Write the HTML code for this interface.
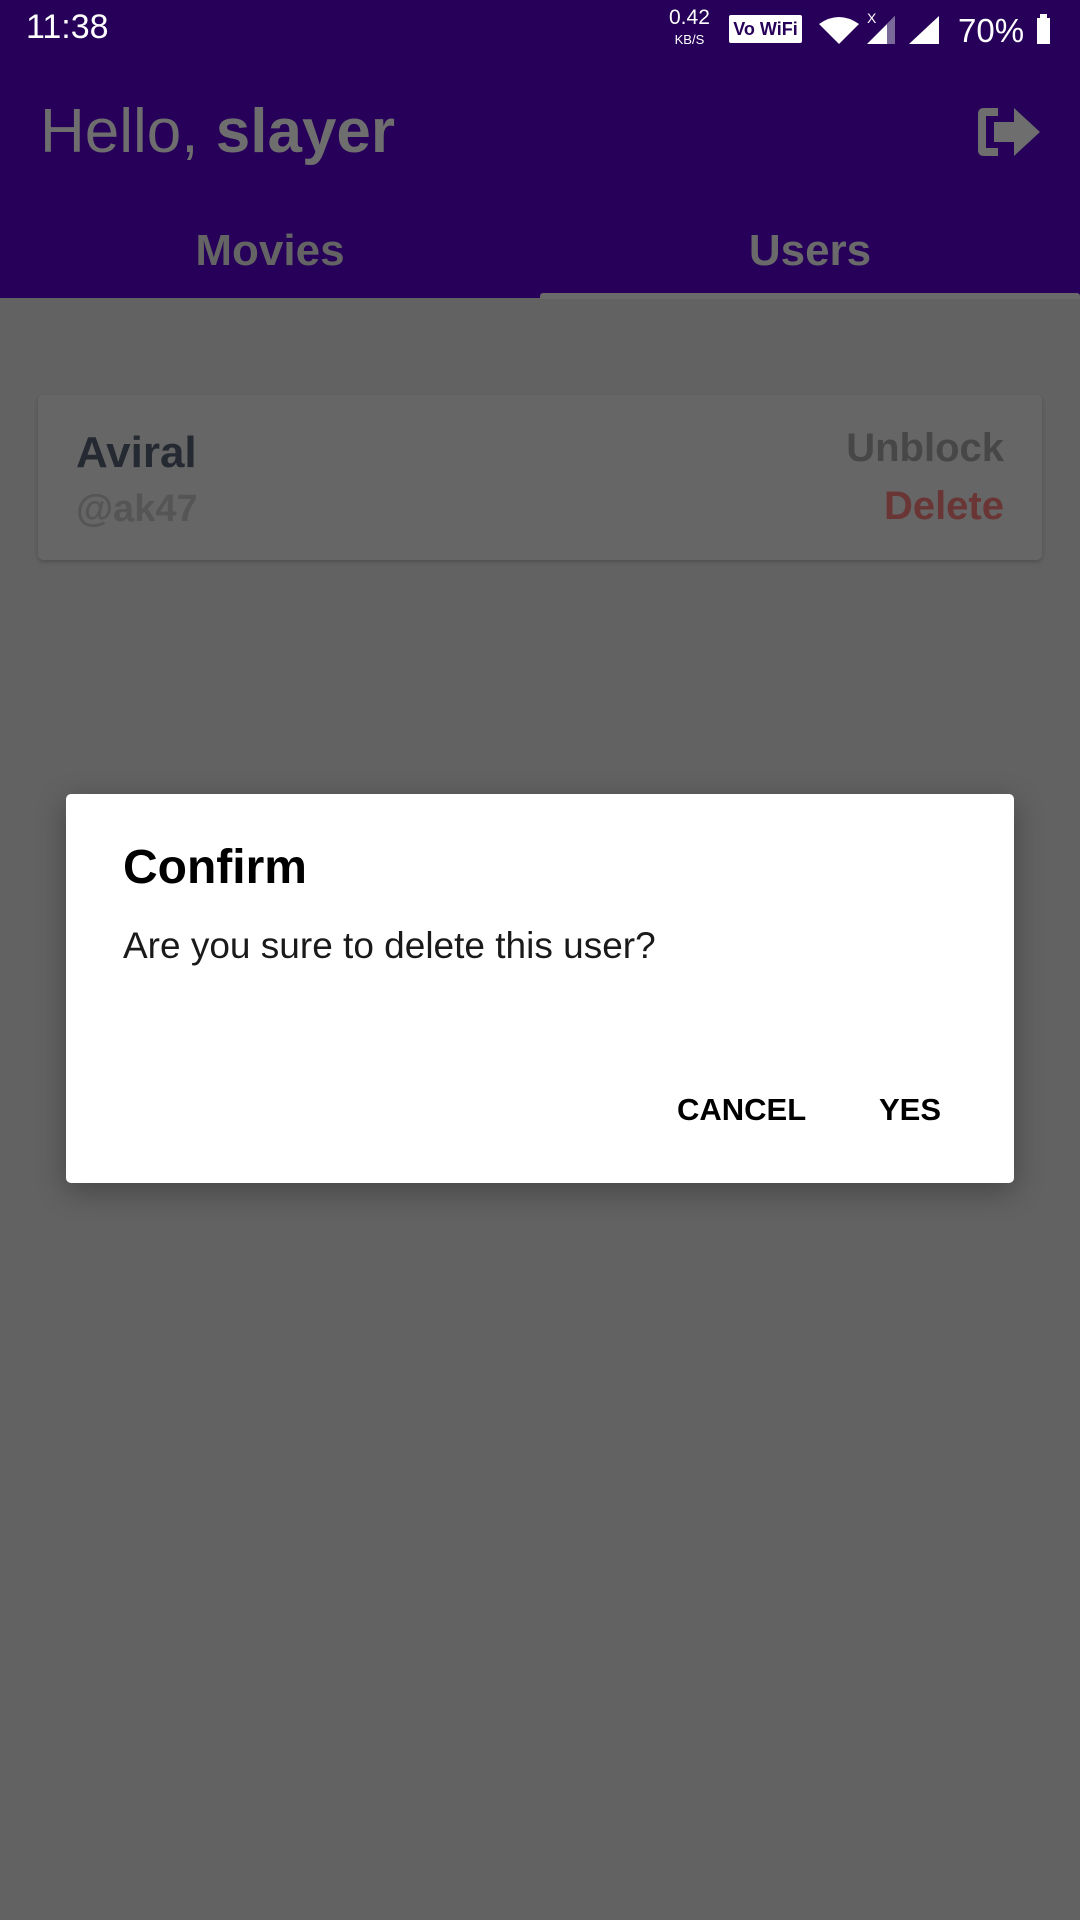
<!DOCTYPE html>
<html><head><meta charset="utf-8"><style>
body{margin:0;width:1080px;height:1920px;background:#626262;font-family:"Liberation Sans",sans-serif;position:relative;overflow:hidden}
.hdr{position:absolute;left:0;top:0;width:1080px;height:298px;background:#260059}
.abs{position:absolute;white-space:nowrap}
</style></head><body>
<div class="hdr"></div>
<div class="abs" style="left:26px;top:8px;font-size:34px;color:#fff">11:38</div>
<div class="abs" style="left:669px;top:8px;font-size:21px;color:#fff;line-height:20px;text-align:center">0.42<br><span style="font-size:13px">KB/S</span></div>
<div class="abs" style="left:729px;top:15px;width:73px;height:28px;background:#fff;border-radius:2px;color:#260059;font-size:18px;font-weight:bold;text-align:center;line-height:28px">Vo WiFi</div>
<svg class="abs" style="left:815px;top:12px" width="240" height="36" viewBox="0 0 240 36">
<path d="M4 12 Q24 -2 44 12 L24 32Z" fill="#fff"/>
<text x="52" y="11" font-size="14" fill="#fff" font-family="Liberation Sans">X</text>
<path d="M52 32 L80 4 L80 32Z" fill="#fff"/><path d="M72 12 L80 4 L80 32 L72 32Z" fill="#7a6a9a"/>
<path d="M94 32 L124 4 L124 32Z" fill="#fff"/>
<text x="143" y="30" font-size="33" fill="#fff" font-family="Liberation Sans">70%</text>
<rect x="222" y="6" width="13" height="26" fill="#fff"/><rect x="225" y="2" width="7" height="4" fill="#fff"/>
</svg>
<div class="abs" style="left:40px;top:96px;font-size:62px;color:#6e6e6e">Hello, <b>slayer</b></div>
<svg class="abs" style="left:976px;top:104px" width="68" height="56" viewBox="0 0 68 56">
<path d="M22 4 H8 Q2 4 2 10 V46 Q2 52 8 52 H22 V44 H10 V12 H22Z" fill="#6e6e6e"/>
<path d="M18 18 H38 V4 L64 28 L38 52 V38 H18Z" fill="#6e6e6e"/>
</svg>
<div class="abs" style="left:0;width:540px;top:226px;text-align:center;font-size:44px;font-weight:bold;color:#646464">Movies</div>
<div class="abs" style="left:540px;width:540px;top:226px;text-align:center;font-size:44px;font-weight:bold;color:#6a6a6a">Users</div>
<div class="abs" style="left:540px;top:293px;width:540px;height:6px;background:#6a6a6a;border-radius:3px 3px 0 0"></div>
<div class="abs" style="left:38px;top:395px;width:1004px;height:165px;background:#666;border-radius:5px;box-shadow:0 2px 4px rgba(0,0,0,.2)"></div>
<div class="abs" style="left:76px;top:428px;font-size:44px;font-weight:bold;color:#252a32">Aviral</div>
<div class="abs" style="left:76px;top:488px;font-size:38px;font-weight:bold;color:#555">@ak47</div>
<div class="abs" style="right:76px;top:426px;font-size:40px;font-weight:bold;color:#474747">Unblock</div>
<div class="abs" style="right:76px;top:484px;font-size:40px;font-weight:bold;color:#6a3535">Delete</div>
<div class="abs" style="left:66px;top:794px;width:948px;height:389px;background:#fff;border-radius:5px;box-shadow:0 8px 30px rgba(0,0,0,.3)"></div>
<div class="abs" style="left:123px;top:840px;font-size:48px;font-weight:bold;color:#000">Confirm</div>
<div class="abs" style="left:123px;top:925px;font-size:37px;color:#1a1a1a">Are you sure to delete this user?</div>
<div class="abs" style="left:677px;top:1092px;font-size:31px;font-weight:bold;color:#000">CANCEL</div>
<div class="abs" style="left:879px;top:1092px;font-size:31px;font-weight:bold;color:#000">YES</div>
</body></html>
